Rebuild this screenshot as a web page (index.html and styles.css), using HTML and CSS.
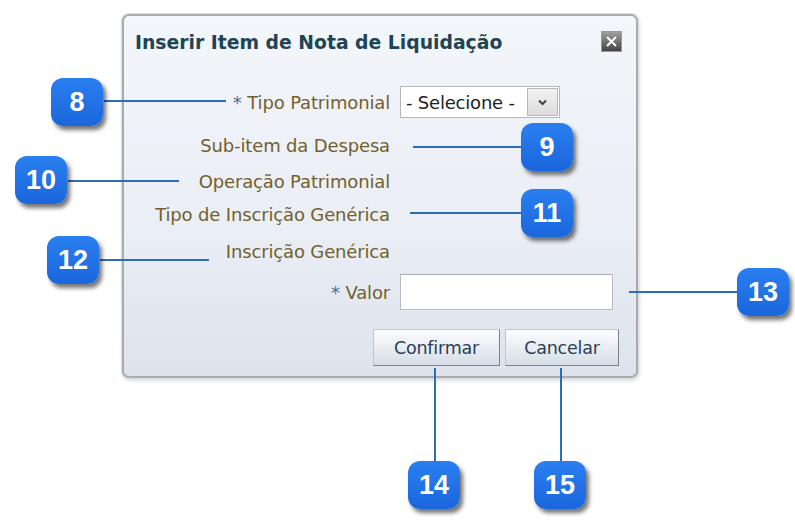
FILE: index.html
```html
<!DOCTYPE html>
<html lang="pt">
<head>
    <meta charset="UTF-8">
    <title>Inserir Item de Nota de Liquidação</title>
    <link rel="stylesheet" href="styles.css">
</head>
<body>

<div class="stage">
    <div class="dialog">
        <div class="dialog-head">
            <h1 class="dialog-title">Inserir Item de Nota de Liquidação</h1>
            <span class="close-btn">
                <svg width="11" height="11" viewBox="0 0 11 11"><path d="M1 1L10 10M10 1L1 10" stroke="#fff" stroke-width="2"/></svg>
            </span>
        </div>

        <div class="form">
            <div class="row row-select">
                <span class="lbl"><span class="req">*</span> Tipo Patrimonial</span>
                <div class="select">
                    <span class="select-text">- Selecione -</span>
                    <span class="select-arrow">
                        <svg width="9" height="7" viewBox="0 0 9 7"><path d="M1 1.5L4.5 5L8 1.5" fill="none" stroke="#444" stroke-width="2"/></svg>
                    </span>
                </div>
            </div>
            <div class="row row-sub"><span class="lbl">Sub-item da Despesa</span></div>
            <div class="row"><span class="lbl">Operação Patrimonial</span></div>
            <div class="row row-short"><span class="lbl">Tipo de Inscrição Genérica</span></div>
            <div class="row row-tall"><span class="lbl">Inscrição Genérica</span></div>
            <div class="row row-input">
                <span class="lbl"><span class="req">*</span> Valor</span>
                <input type="text" class="text-input">
            </div>
        </div>

        <div class="actions">
            <button class="btn btn-confirm">Confirmar</button>
            <button class="btn btn-cancel">Cancelar</button>
        </div>
    </div>

    <!-- callouts -->
    <span class="line h l8"></span>
    <span class="line h l9"></span>
    <span class="line h l10"></span>
    <span class="line h l11"></span>
    <span class="line h l12"></span>
    <span class="line h l13"></span>
    <span class="line v l14"></span>
    <span class="line v l15"></span>

    <span class="badge b8">8</span>
    <span class="badge b9">9</span>
    <span class="badge b10">10</span>
    <span class="badge b11">11</span>
    <span class="badge b12">12</span>
    <span class="badge b13">13</span>
    <span class="badge b14">14</span>
    <span class="badge b15">15</span>
</div>

</body>
</html>
```

FILE: styles.css
```css
body {
    margin: 0;
    background-color: #fff;
    font-family: "DejaVu Sans", Verdana, sans-serif;
}
.stage {
    position: relative;
    width: 795px;
    height: 523px;
    padding: 14px 0 0 122px;
    box-sizing: border-box;
    overflow: hidden;
}
.dialog {
    width: 516px;
    height: 364px;
    box-sizing: border-box;
    border: 2px solid #a9abae;
    border-radius: 7px;
    background: linear-gradient(#f3f6fa, #eaeef5 60%, #dde3ec);
    box-shadow: 0 0 0 1px #dcdee1, 1px 2px 4px rgba(0, 0, 0, 0.2);
}
.dialog-head {
    display: flex;
    justify-content: space-between;
    align-items: flex-start;
    height: 70px;
    padding: 15px 14px 0 11px;
    box-sizing: border-box;
}
.dialog-title {
    margin: 0;
    font-size: 18.8px;
    line-height: 24px;
    font-weight: bold;
    color: #1f4454;
}
.close-btn {
    display: flex;
    align-items: center;
    justify-content: center;
    width: 21px;
    height: 21px;
    box-sizing: border-box;
    border: 1px solid #9a9a9a;
    background: linear-gradient(#a0a0a0, #444);
}
.row {
    display: flex;
    align-items: center;
    height: 36px;
}
.row-select {
    height: 32px;
}
.row-sub {
    margin-top: 9px;
}
.row-short {
    height: 30px;
}
.row-tall {
    height: 44px;
}
.row-input {
    margin-top: 1px;
}
.lbl {
    width: 266px;
    margin-right: 10px;
    text-align: right;
    font-size: 18px;
    letter-spacing: -0.15px;
    color: #735f2c;
    white-space: nowrap;
}
.req {
    color: #4d6f96;
}
.select {
    display: flex;
    align-items: center;
    justify-content: space-between;
    width: 160px;
    height: 32px;
    box-sizing: border-box;
    border: 1px solid #b4b7bb;
    background-color: #fff;
    padding: 0 1px 0 5px;
}
.select-text {
    font-size: 18px;
    letter-spacing: -0.2px;
    color: #222;
    white-space: nowrap;
}
.select-arrow {
    display: flex;
    align-items: center;
    justify-content: center;
    flex-shrink: 0;
    width: 31px;
    height: 28px;
    box-sizing: border-box;
    border: 1px solid #b8b8b8;
    background: linear-gradient(#f2f2f2, #dcdcdc);
}
.text-input {
    width: 213px;
    height: 36px;
    box-sizing: border-box;
    margin: 0;
    border: 1px solid #b9bcc2;
    border-top-color: #a9acb2;
    background-color: #fff;
}
.actions {
    display: flex;
    justify-content: flex-end;
    gap: 5px;
    margin-top: 19px;
    padding-right: 17px;
}
.btn {
    height: 37px;
    box-sizing: border-box;
    border: 1px solid #c2c7ce;
    border-right-color: #7d838b;
    border-bottom-color: #7d838b;
    background: linear-gradient(#fbfcfd, #e8ecf2 55%, #d6dde7);
    font-family: "DejaVu Sans", Verdana, sans-serif;
    font-size: 17.5px;
    letter-spacing: -0.2px;
    color: #2a3f55;
    padding: 0;
}
.btn-confirm {
    width: 127px;
}
.btn-cancel {
    width: 114px;
}

/* callouts */
.line {
    position: absolute;
    background-color: #2c6db6;
}
.line.h {
    height: 2px;
}
.line.v {
    width: 2px;
}
.l8 { left: 104px; top: 100px; width: 122px; }
.l9 { left: 413px; top: 146px; width: 110px; }
.l10 { left: 68px; top: 180px; width: 111px; }
.l11 { left: 410px; top: 212px; width: 113px; }
.l12 { left: 100px; top: 259px; width: 109px; }
.l13 { left: 629px; top: 291px; width: 110px; }
.l14 { left: 434px; top: 368px; height: 94px; }
.l15 { left: 560px; top: 368px; height: 94px; }

.badge {
    position: absolute;
    width: 52px;
    height: 48px;
    border-radius: 12px;
    background: linear-gradient(#2a7ff0, #1a66dc);
    box-shadow: 3px 4px 4px rgba(0, 0, 0, 0.55);
    color: #fff;
    font-family: "Liberation Sans", Arial, sans-serif;
    font-weight: bold;
    font-size: 27px;
    line-height: 48px;
    text-align: center;
}
.b8 { left: 51px; top: 78px; }
.b9 { left: 521px; top: 123px; }
.b10 { left: 15px; top: 156px; }
.b11 { left: 521px; top: 189px; }
.b12 { left: 47px; top: 236px; }
.b13 { left: 737px; top: 268px; }
.b14 { left: 408px; top: 461px; }
.b15 { left: 534px; top: 461px; }
```
